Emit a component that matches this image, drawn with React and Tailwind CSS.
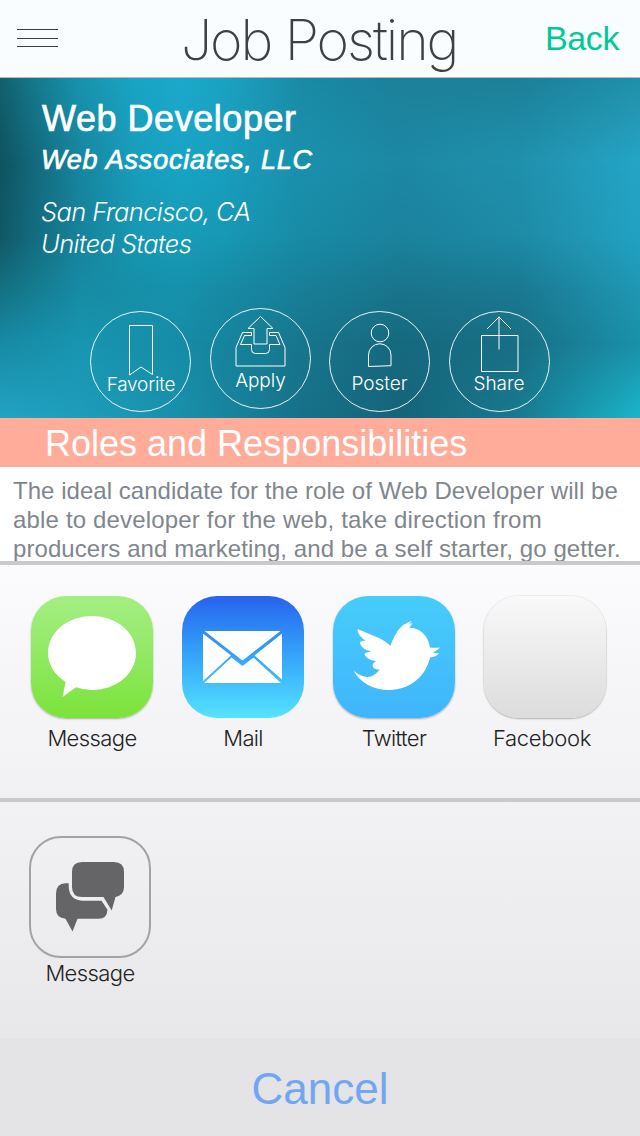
const sans = 'font-["Liberation_Sans",Arial,sans-serif]';
const light = 'font-[Inter,"Liberation_Sans",sans-serif] font-light';

function Header() {
  return (
    <header className="flex h-[78px] items-start border-b border-[#b4bcbe] bg-[#fafdff]">
      <button aria-label="Menu" className="w-[180px] shrink-0 pt-[29px] pl-[17px]">
        <svg width="41" height="19" viewBox="0 0 41 19" stroke="#3c3c3c" shapeRendering="crispEdges">
          <path d="M0 .5h41M0 9.5h41M0 17.5h41" />
        </svg>
      </button>
      <h1 className={'pl-[1px] text-[55.5px] leading-[79px] font-extralight tracking-[-2.1px] whitespace-nowrap text-[#404040] font-[Inter,"Liberation_Sans",sans-serif]'}>Job Posting</h1>
      <button className={`${sans} ml-auto pr-[21px] text-[34px] leading-[76px] tracking-[-0.4px] text-[#00c997]`}>Back</button>
    </header>
  );
}

function Action({ label, shift, labelClass, children }) {
  return (
    <button className={`flex h-[101px] w-[101px] flex-col items-center rounded-full border border-white/90 text-white ${shift}`}>
      <svg width="99" height="61" viewBox="1 1 99 61" fill="none" stroke="currentColor" strokeWidth="1" className="shrink-0 overflow-visible">
        {children}
      </svg>
      <span className={`${light} text-[19px] leading-[24px] ${labelClass}`}>{label}</span>
    </button>
  );
}

// Horizontal colour bands that fade into each other from top to bottom.
const bands = [
  'bg-[linear-gradient(90deg,#12606e_0%,#157c90_6%,#1893ad_12.5%,#1aa4c5_21%,#1ba9cb_28%,#1ba3c2_35%,#1a8ba6_47%,#1c8099_62.5%,#1c8098_81%,#2190aa_100%)]',
  'bg-[linear-gradient(90deg,#0f5260_0%,#136c7f_6%,#1785a0_12.5%,#189dbb_21%,#18a4c5_28%,#199fbf_35%,#1a90ad_47%,#1d88a4_62.5%,#2090ad_81%,#25a5c6_100%)] [mask-image:linear-gradient(180deg,transparent_0px,black_85px)]',
  'bg-[linear-gradient(90deg,#115866_0%,#146e81_6%,#17839b_12.5%,#1797b2_21%,#179cb8_28%,#1798b4_35%,#188ba6_47%,#1b829c_62.5%,#1e8aa6_81%,#22a2c2_100%)] [mask-image:linear-gradient(180deg,transparent_85px,black_160px)]',
  'bg-[linear-gradient(90deg,#147080_0%,#178ba4_12.5%,#1692ad_28%,#187f98_47%,#19758c_62.5%,#1a7991_81%,#1f98b5_100%)] [mask-image:linear-gradient(180deg,transparent_160px,black_210px)]',
  'bg-[linear-gradient(90deg,#188aa5_0%,#1895b1_12.5%,#168ca7_28%,#17768d_47%,#16697f_62.5%,#186f85_81%,#1b90a9_100%)] [mask-image:linear-gradient(180deg,transparent_210px,black_265px)]',
  'bg-[linear-gradient(90deg,#22a4c3_0%,#1f9cba_12.5%,#1990ab_28%,#167189_47%,#166478_62.5%,#187a90_81%,#1ab6cb_100%)] [mask-image:linear-gradient(180deg,transparent_265px,black_340px)]',
];

function Hero() {
  return (
    <section className="grid h-[340px] text-white">
      {bands.map((band) => (
        <div key={band} className={`[grid-area:1/1] ${band}`} />
      ))}
      <div className="z-10 flex flex-col [grid-area:1/1]">
        <div className="pt-[20px] pl-[41px] whitespace-nowrap">
          <h2 className={`${sans} pl-[1px] text-[36px] leading-[42px] tracking-[0.55px] [-webkit-text-stroke:0.7px_white]`}>Web Developer</h2>
          <p className={`${sans} text-[27px] leading-[40px] tracking-[0.8px] italic [-webkit-text-stroke:0.7px_white]`}>Web Associates, LLC</p>
          <div className={`${light} pt-[16px] text-[25.5px] leading-[32px] tracking-[-0.6px] italic`}>
            <p>San Francisco, CA</p>
            <p>United States</p>
          </div>
        </div>
        <div className="mt-[48px] flex gap-[18.5px] pl-[90px]">
          <Action label="Favorite" shift="mt-[3px]" labelClass="tracking-[-0.2px] pl-[1px]">
            <path d="M39.5 14.5h23v49l-11.5-7.500-11.500 8z" />
          </Action>
          <Action label="Apply" shift="" labelClass="-mt-[1px] pl-[1px]">
            <path d="M50.500 8.500 38 20.500h6v15.500h13v-15.500h6z" />
            <path d="M41.500 24.500h-9l-6.500 15v18.500h49v-18.500l-6.500-15h-9v3h6.500l4 9h-10.500v5q0 4-4 4h-10q-4 0-4-4v-5h-11l4-9h7z" />
          </Action>
          <Action label="Poster" shift="mt-[3px]" labelClass="-mt-[1px]">
            <circle cx="51" cy="22" r="8.800" />
            <path d="M39.500 55.500v-11.500a11.250 11.250 0 0 1 22.500 0v10.700z" />
          </Action>
          <Action label="Share" shift="mt-[3px]" labelClass="-mt-[1px]">
            <path d="M32.500 24.500h36.500v36h-36.500zM50 38.500v-33M38 18l12-12 12 12" />
          </Action>
        </div>
      </div>
    </section>
  );
}

function Tile({ label, labelClass, className, children }) {
  return (
    <button className="flex w-[122px] flex-col items-center">
      <span className={`flex h-[122px] w-[122px] overflow-hidden rounded-[35px] ${className}`}>
        <svg width="122" height="122" viewBox="0 0 122 122" fill="#fff">{children}</svg>
      </span>
      <span className={`${light} text-[22px] leading-[40px] whitespace-nowrap text-[#222] ${labelClass}`}>{label}</span>
    </button>
  );
}

function ShareSheet() {
  return (
    <section className="flex grow flex-col">
      <div className="flex h-[241px] gap-[29px] border-y-4 border-[#c9c9ca] bg-linear-to-b from-[#fbfbfd] to-[#f1f1f3] pt-[31px] pl-[31px]">
        <Tile label="Message" labelClass="tracking-[-0.6px]" className="bg-linear-to-b from-[#a4ee82] to-[#7be336] shadow-[0_1px_2px_rgba(0,0,0,0.3)]">
          <path d="M61 20c24.300 0 44 16.300 44 37s-19.700 37-44 37q-8.500 0-16-2.700L31.500 101l3.200-15C24 79 17 69 17 57c0-20.700 19.700-37 44-37z" />
        </Tile>
        <Tile label="Mail" labelClass="tracking-[-0.7px]" className="bg-linear-to-b from-[#2a62ee] to-[#56e3ff]">
          <path d="M22.500 35h76L60.500 64.500zM21 37.500 49 59.500 21 85zM100 37.500 72.500 59.500 100 83.500zM22 87 49.500 61.500 60.500 70 71.500 61.500 99 87z" />
        </Tile>
        <Tile label="Twitter" labelClass="tracking-[-0.6px]" className="bg-linear-to-b from-[#46cdfb] to-[#40b5fc] shadow-[0_1px_2px_rgba(0,0,0,0.3)]">
          <path d="M24.500 33 46 42Q54 46 57.500 50C60 42 66 30 73 27.500Q75 25.500 79 25L76 27.500 79.500 27.500 76 31.500C88 32 95 40 97 51.500Q102 52 107 51.500 104.500 55 100 56.200 103 57.500 106 57.200 103 61 97 61.500C93 80 77 94 56 94 41 94 27 87 20.500 74.500 26 80 33 82 38 80.500Q43 78.500 46.500 73.500 40 73.500 39.500 69.500 40 66.500 43.500 65C37 64.500 32 61.500 31.500 57.500Q34 56 38.500 55.500C31 54 27 50 27 46Q28.500 44.500 32.500 44.500C27 41 24.500 37 24.500 33z" />
        </Tile>
        <Tile label="Facebook" labelClass="tracking-[-0.3px] pr-[6px]" className="bg-linear-to-b from-[#f9f9fa] to-[#dcdcdc] shadow-[0_0_0_1px_rgba(0,0,0,0.04),0_1px_2px_rgba(0,0,0,0.25)]" />
      </div>
      <div className="flex h-[236px] items-start bg-linear-to-b from-[#f2f2f4] to-[#e8e8ea] pt-[34px] pl-[29px]">
        <button className="flex w-[122px] flex-col items-center">
          <span className="flex h-[122px] w-[122px] rounded-[32px] border-2 border-[#a3a3a4]">
            <svg width="118" height="118" viewBox="2 2 118 118" fill="#656567">
              <path d="M53 26h32q10 0 10 10v15q0 8-8.500 10L82.700 74.500 74.500 61H53q-10 0-10-10V36q0-10 10-10z" />
              <path d="M27 57.500q0-10 9.500-10.300h3.200V51q1 13 13.300 13.700h19.500l6 9q-.500 9-9 9H48.500L43.500 95.500 36.500 82.700Q27 82 27 73z" />
            </svg>
          </span>
          <span className={`${light} -mt-[5px] text-[22px] leading-[40px] tracking-[-0.6px] text-[#222]`}>Message</span>
        </button>
      </div>
      <button className={`${sans} h-[98px] bg-[#e4e4e6] pt-[4px] text-[44px] leading-[94px] text-[#72a6f2]`}>Cancel</button>
    </section>
  );
}

export default function App() {
  return (
    <main className="flex h-[1136px] w-[640px] flex-col overflow-hidden bg-white">
      <Header />
      <Hero />
      <h3 className={`${sans} h-[49px] bg-[#ffac9a] pl-[45px] text-[36px] leading-[51px] whitespace-nowrap text-white`}>Roles and Responsibilities</h3>
      <p className={`${sans} h-[94px] overflow-hidden pt-[9px] pl-[13px] text-[24px] leading-[29px] tracking-[0.08px] whitespace-nowrap text-[#7f868e]`}>
        <span className="tracking-[0.04px]">The ideal candidate for the role of Web Developer will be</span><br />
        <span className="tracking-[0.17px]">able to developer for the web, take direction from</span><br />
        producers and marketing, and be a self starter, go getter.
      </p>
      <ShareSheet />
    </main>
  );
}
